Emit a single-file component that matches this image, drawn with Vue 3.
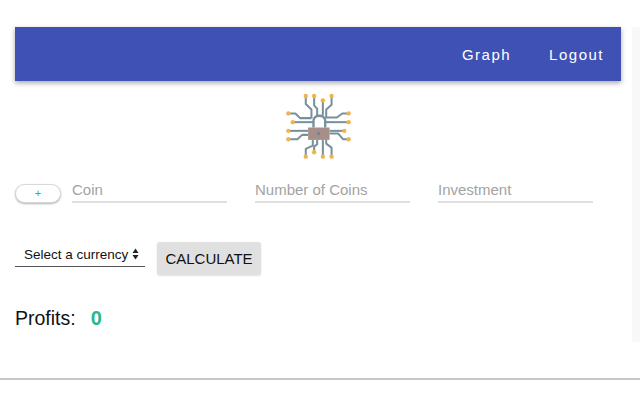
<template>
  <div class="page">
    <div class="shell">
      <div class="main">
        <nav class="navbar">
          <a class="nav-link">Graph</a>
          <a class="nav-link">Logout</a>
        </nav>

        <div class="logo-wrap">
          <svg class="logo" viewBox="45 25 200 200" width="67" height="67">
            <!-- traces -->
            <g fill="none" stroke="#78909c" stroke-width="6" stroke-linejoin="round">
              <path d="M107 34V58L124 74V100" />
              <path d="M132 34V62L141 72V92" />
              <path d="M158 47V92" />
              <path d="M184 34V60L168 74V100" />
              <path d="M55 86H76L90 100H124" />
              <path d="M68 112H130" />
              <path d="M55 138H114" />
              <path d="M55 163H82L96 150H114" />
              <path d="M235 86H216L200 98H168" />
              <path d="M235 112H165" />
              <path d="M222 138H178" />
              <path d="M235 163H218L204 146H178" />
              <path d="M107 215V192L128 182V165" />
              <path d="M132 202V185L141 178V165" />
              <path d="M158 215V165" />
              <path d="M184 215V188L168 176V165" />
              <path d="M130 128V108C130 88 165 88 165 108V128" stroke-width="7" />
            </g>
            <!-- pins -->
            <g fill="#f0b44c">
              <circle v-for="(p, i) in pins" :key="i" :cx="p[0]" :cy="p[1]" r="6.5" />
            </g>
            <!-- lock body -->
            <rect x="114" y="128" width="64" height="37" fill="#a68f88" />
            <circle cx="145" cy="146" r="5" fill="#6f8796" />
          </svg>
        </div>

        <div class="coin-row">
          <button class="add-btn">+</button>
          <input class="field" placeholder="Coin" />
          <input class="field" placeholder="Number of Coins" />
          <input class="field" placeholder="Investment" />
        </div>

        <div class="calc-row">
          <div class="currency">
            <span>Select a currency</span>
            <svg class="arrows" viewBox="0 0 7 12" width="7" height="12">
              <path d="M3.5 0.5L6.5 5H0.5Z M3.5 11.5L0.5 7H6.5Z" fill="#222" />
            </svg>
          </div>
          <button class="calc-btn">CALCULATE</button>
        </div>

        <div class="profits">
          <span>Profits:</span>
          <span class="profit-value">{{ profit }}</span>
        </div>
      </div>
      <div class="scroll-strip"></div>
    </div>
    <div class="rule"></div>
  </div>
</template>

<script setup>
import { ref } from "vue";

const profit = ref(0);

const pins = [
  [107, 34], [132, 34], [158, 47], [184, 34],
  [55, 86], [68, 112], [55, 138], [55, 163],
  [235, 86], [235, 112], [222, 138], [235, 163],
  [107, 215], [132, 202], [158, 215], [184, 215],
];
</script>

<style>
html,
body {
  margin: 0;
  background: #fff;
}
</style>

<style scoped>
.page {
  width: 640px;
  height: 400px;
  padding-top: 27px;
  box-sizing: border-box;
  overflow: hidden;
  font-family: "Liberation Sans", Arial, sans-serif;
  color: #111;
}

.shell {
  display: flex;
  height: 315px;
}

.main {
  width: 606px;
  margin-left: 15px;
}

.scroll-strip {
  width: 8px;
  margin-left: 11px;
  background: #f8f8f8;
}

/* Navbar */
.navbar {
  height: 54px;
  background: #3f51b5;
  display: flex;
  align-items: center;
  justify-content: flex-end;
  gap: 38px;
  padding-right: 17px;
  box-shadow: 0 2px 5px rgba(0, 0, 0, 0.35);
}

.nav-link {
  color: #fff;
  font-size: 15px;
  letter-spacing: 1.5px;
}

.logo-wrap {
  display: flex;
  justify-content: center;
  padding-top: 12px;
  padding-left: 0;
  height: 67px;
}

.logo {
  display: block;
  margin-left: 1px;
}

/* Riga monete */
.coin-row {
  display: flex;
  align-items: flex-end;
  margin-top: 17px;
}

.add-btn {
  width: 53px;
  height: 19px;
  margin: 0 11px 0 0;
  padding: 0;
  border: 1px solid #d8d8d8;
  border-radius: 10px;
  background: #fff;
  color: #2bb58c;
  font-family: inherit;
  font-size: 11px;
  line-height: 17px;
  box-shadow: 0 1px 2px rgba(0, 0, 0, 0.3);
}

.field {
  width: 155px;
  height: 26px;
  margin-right: 28px;
  padding: 0;
  border: none;
  border-bottom: 2px solid #e0e0e0;
  outline: none;
  background: transparent;
  font-family: inherit;
  font-size: 15px;
  box-sizing: border-box;
}

.field::placeholder {
  color: #a3a3a3;
  opacity: 1;
}

/* Riga calcolo */
.calc-row {
  display: flex;
  align-items: flex-start;
  margin-top: 39px;
}

.currency {
  width: 130px;
  height: 25px;
  margin-right: 12px;
  margin-top: 0;
  box-sizing: border-box;
  padding-left: 9px;
  border-bottom: 1px solid #555;
  display: flex;
  align-items: center;
  gap: 4px;
  font-size: 13.5px;
  white-space: nowrap;
}

.arrows {
  flex: none;
}

.calc-btn {
  width: 104px;
  height: 33px;
  padding: 0;
  border: none;
  border-radius: 3px;
  background: #e0e0e0;
  color: #111;
  font-family: inherit;
  font-size: 15px;
  box-shadow: 0 1px 2px rgba(0, 0, 0, 0.12);
}

/* Profitti */
.profits {
  display: flex;
  align-items: center;
  gap: 15px;
  margin-top: 31px;
  font-size: 19.5px;
  line-height: 24px;
}

.profit-value {
  color: #2bb58c;
  font-weight: bold;
  font-size: 20px;
}

.rule {
  height: 2px;
  margin-top: 36px;
  background: #c8c8c8;
}
</style>
